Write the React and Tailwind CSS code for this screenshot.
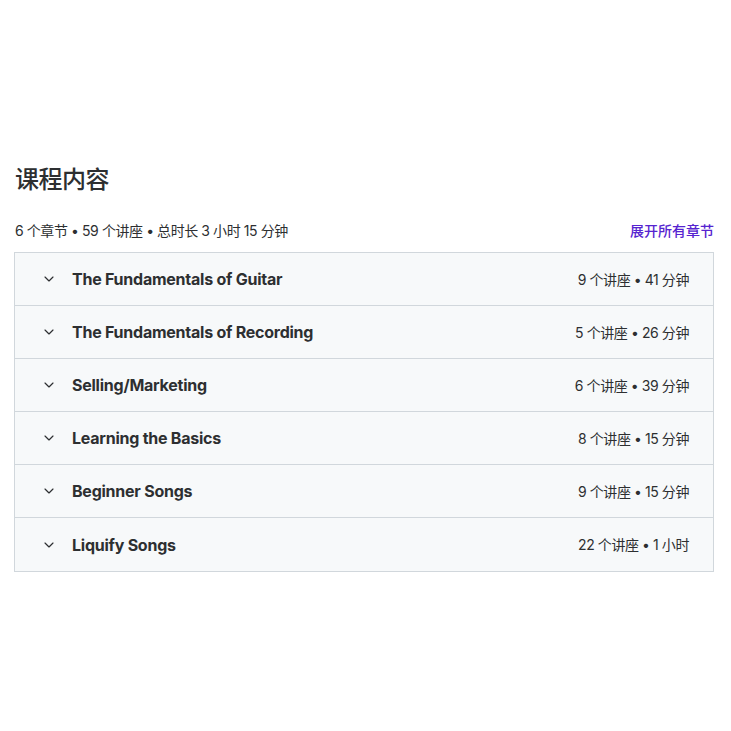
import { ChevronDown } from "lucide-react";

const sections = [
  { title: "The Fundamentals of Guitar", meta: "9 个讲座 • 41 分钟" },
  { title: "The Fundamentals of Recording", meta: "5 个讲座 • 26 分钟" },
  { title: "Selling/Marketing", meta: "6 个讲座 • 39 分钟" },
  { title: "Learning the Basics", meta: "8 个讲座 • 15 分钟" },
  { title: "Beginner Songs", meta: "9 个讲座 • 15 分钟" },
  { title: "Liquify Songs", meta: "22 个讲座 • 1 小时" },
];

export default function App() {
  return (
    <div
      className="w-[731px] h-[731px] bg-white text-[#2d2f31] pl-[14px] pt-[164px]"
      style={{ fontFamily: '"Inter", "Noto Sans CJK SC", sans-serif' }}
    >
      <div className="w-[700px]">
        <h2 className="text-[24px] leading-[32px] font-medium pl-[1px] tracking-[-0.02em]">课程内容</h2>

        <div className="mt-[25px] flex items-center justify-between text-[14px] leading-[20px]">
          <span className="pl-[1px] tracking-[-0.03em]">6 个章节 • 59 个讲座 • 总时长 3 小时 15 分钟</span>
          <button className="text-[#5624d0] font-medium">展开所有章节</button>
        </div>

        {/* Sections */}
        <div className="mt-[11px] border border-[#d1d7dc]">
          {sections.map((s, i) => (
            <div
              key={s.title}
              className={`flex items-center justify-between h-[53px] bg-[#f7f9fa] pl-[26px] pr-[24px] ${
                i < sections.length - 1 ? "border-b border-[#d1d7dc]" : ""
              }`}
            >
              <div className="flex items-center gap-[15px]">
                <ChevronDown size={16} strokeWidth={1.75} className="text-[#2d2f31]" />
                <span className="text-[16px] font-bold tracking-[-0.015em]">{s.title}</span>
              </div>
              <span className="text-[14px] tracking-[-0.03em]">{s.meta}</span>
            </div>
          ))}
        </div>
      </div>
    </div>
  );
}
